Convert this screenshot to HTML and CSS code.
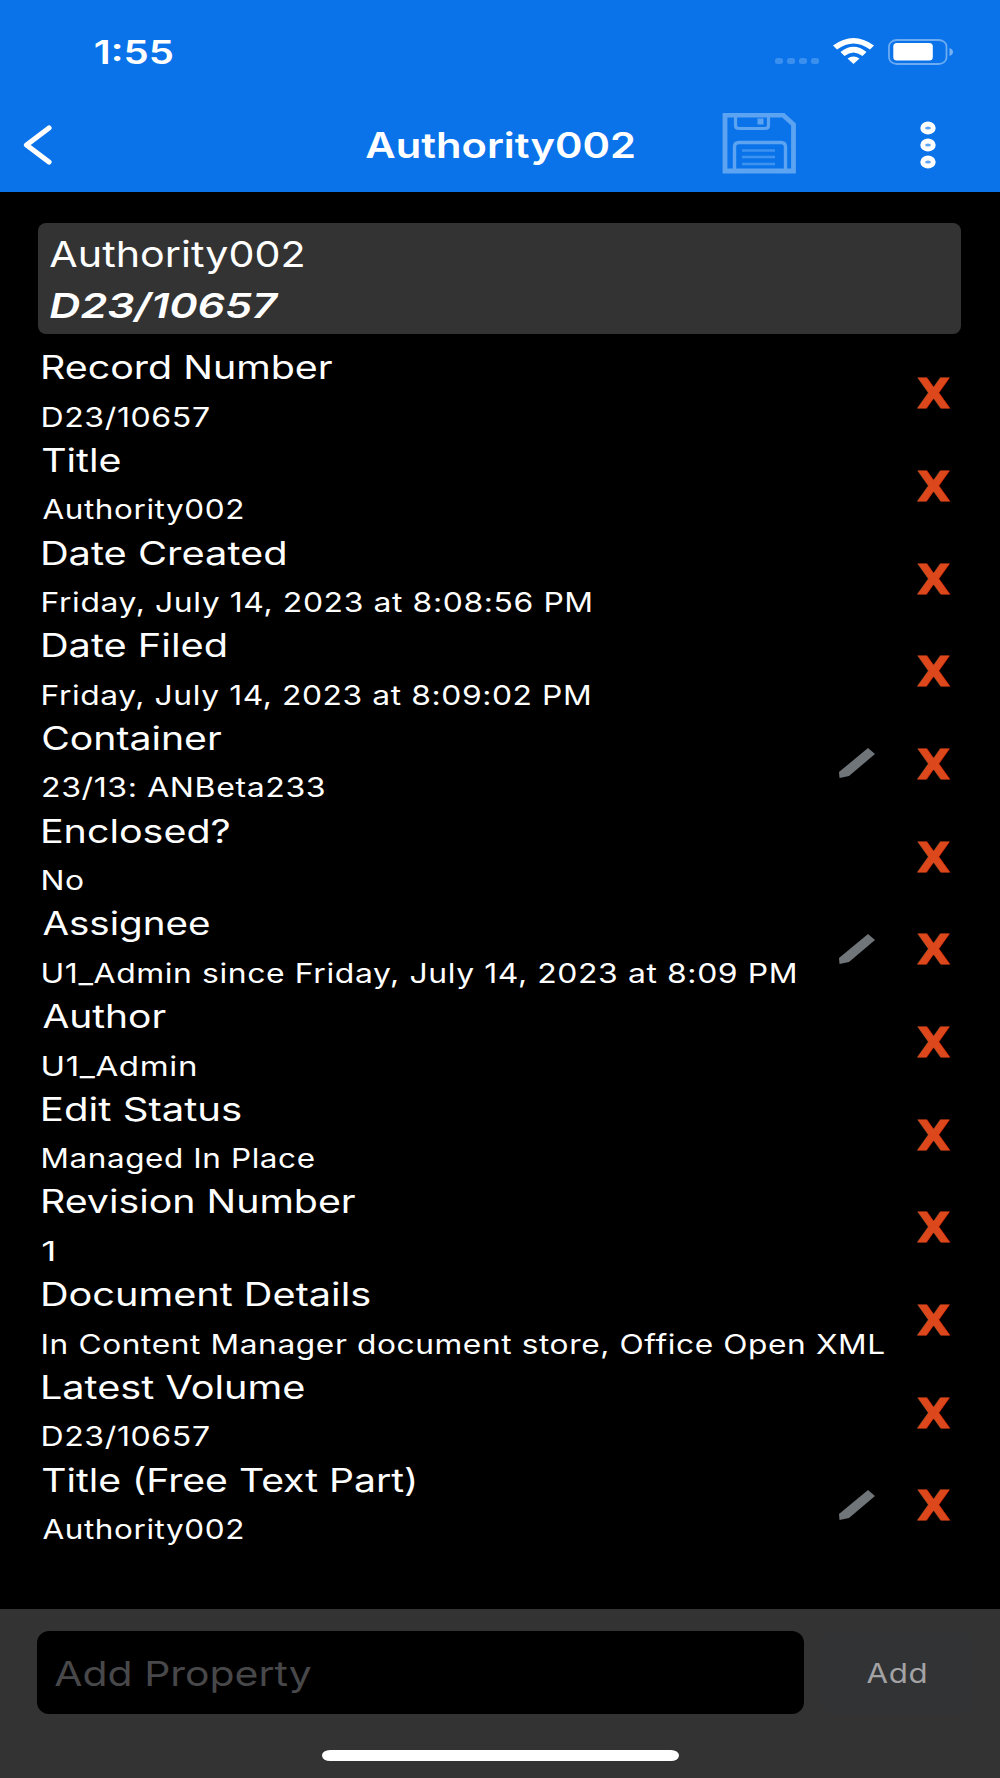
FILE: index.html
```html
<!DOCTYPE html>
<html lang="en">
<head>
<meta charset="utf-8">
<title>Authority002</title>
<link rel="stylesheet" href="styles.css">
</head>
<body>
<header class="top">
  <div class="status">
    <span class="time" data-w="77.5">1:55</span>
    <svg class="status-icons" width="180" height="30" viewBox="0 0 180 30">
      <g fill="#fff" fill-opacity=".2">
        <rect x="0" y="21" width="8" height="6" rx="2.5"/><rect x="12" y="21" width="8" height="6" rx="2.5"/><rect x="24" y="21" width="8" height="6" rx="2.5"/><rect x="36" y="21" width="8" height="6" rx="2.5"/>
      </g>
      <g fill="#fff">
        <path d="M58 8.500Q78.500 -6.500 99 8.500L95 12.500Q78.500 0.500 62 12.500Z"/>
        <path d="M65.500 15Q78.500 4.500 91.500 15L87.500 19Q78.500 12 69.500 19Z"/>
        <path d="M72.500 21.500Q78.500 17.500 84.500 21.500L78.500 27Z"/>
      </g>
      <rect x="114" y="3" width="57.500" height="24" rx="8" ry="6.500" fill="none" stroke="#fff" stroke-opacity=".4" stroke-width="1.800"/>
      <rect x="118.300" y="6" width="39.500" height="17.500" rx="3.500" fill="#fff"/>
      <path d="M174.500 11Q178 12.500 178 15T174.500 19Z" fill="#fff" fill-opacity=".45"/>
    </svg>
  </div>
  <nav class="nav">
    <svg class="back" width="32" height="44" viewBox="0 0 32 44"><path d="M26 5L3.500 22L26 39" fill="none" stroke="#fff" stroke-width="5.200" stroke-linecap="round" stroke-linejoin="round"/></svg>
    <h1 class="title" data-w="268">Authority002</h1>
    <svg class="save" width="74" height="61" viewBox="0 0 74 61" fill="none" stroke="#5ca3f2">
      <path d="M3 2H61L71.500 11.500V58H3Z" stroke-width="4.800"/>
      <path d="M13.500 3V12.500Q13.500 15.500 17 15.500H43Q46.500 15.500 46.500 12.500V3" stroke-width="3.200"/>
      <rect x="35.500" y="5.500" width="6" height="6" fill="#5ca3f2" stroke="none"/>
      <path d="M12.500 57V34Q12.500 29.500 17 29.500H59Q63.500 29.500 63.500 34V57" stroke-width="3.400"/>
      <path d="M20 37.500H53M20 44H53M20 51H53" stroke-width="2.600" stroke="#3e93f0"/>
    </svg>
    <svg class="more" width="16" height="48" viewBox="0 0 16 48" fill="#5ca3f2" stroke="#fff" stroke-width="4.800">
      <ellipse cx="8" cy="7" rx="5.300" ry="4"/><ellipse cx="8" cy="24" rx="5.300" ry="4"/><ellipse cx="8" cy="41" rx="5.300" ry="4"/>
    </svg>
  </nav>
</header>
<main class="content">
  <section class="card">
    <div class="card-name" data-w="253">Authority002</div>
    <div class="card-number" data-w="229">D23/10657</div>
  </section>
  <ul class="properties">
    <li class="row"><div class="text"><div class="label" data-w="289">Record Number</div><div class="value" data-w="166">D23/10657</div></div><span class="remove">X</span></li>
    <li class="row"><div class="text"><div class="label" data-w="77">Title</div><div class="value" data-w="199.500">Authority002</div></div><span class="remove">X</span></li>
    <li class="row"><div class="text"><div class="label" data-w="242">Date Created</div><div class="value" data-w="548">Friday, July 14, 2023 at 8:08:56 PM</div></div><span class="remove">X</span></li>
    <li class="row"><div class="text"><div class="label" data-w="182.500">Date Filed</div><div class="value" data-w="546.500">Friday, July 14, 2023 at 8:09:02 PM</div></div><span class="remove">X</span></li>
    <li class="row"><div class="text"><div class="label" data-w="178">Container</div><div class="value" data-w="281">23/13: ANBeta233</div></div><svg class="edit" width="38" height="32" viewBox="0 0 38 32"><path d="M30 1L37 7L11 29L1.500 31L1 25Z" fill="#6f7579"/></svg><span class="remove">X</span></li>
    <li class="row"><div class="text"><div class="label" data-w="186">Enclosed?</div><div class="value" data-w="40">No</div></div><span class="remove">X</span></li>
    <li class="row"><div class="text"><div class="label" data-w="166">Assignee</div><div class="value" data-w="752.500">U1_Admin since Friday, July 14, 2023 at 8:09 PM</div></div><svg class="edit" width="38" height="32" viewBox="0 0 38 32"><path d="M30 1L37 7L11 29L1.500 31L1 25Z" fill="#6f7579"/></svg><span class="remove">X</span></li>
    <li class="row"><div class="text"><div class="label" data-w="122.500">Author</div><div class="value" data-w="152">U1_Admin</div></div><span class="remove">X</span></li>
    <li class="row"><div class="text"><div class="label" data-w="197.500">Edit Status</div><div class="value" data-w="271">Managed In Place</div></div><span class="remove">X</span></li>
    <li class="row"><div class="text"><div class="label" data-w="312">Revision Number</div><div class="value" data-w="10.500">1</div></div><span class="remove">X</span></li>
    <li class="row"><div class="text"><div class="label" data-w="326.500">Document Details</div><div class="value" data-w="841.500">In Content Manager document store, Office Open XML</div></div><span class="remove">X</span></li>
    <li class="row"><div class="text"><div class="label" data-w="261">Latest Volume</div><div class="value" data-w="166">D23/10657</div></div><span class="remove">X</span></li>
    <li class="row"><div class="text"><div class="label" data-w="371.500">Title (Free Text Part)</div><div class="value" data-w="199.500">Authority002</div></div><svg class="edit" width="38" height="32" viewBox="0 0 38 32"><path d="M30 1L37 7L11 29L1.500 31L1 25Z" fill="#6f7579"/></svg><span class="remove">X</span></li>
  </ul>
</main>
<footer class="bottom">
  <div class="add-bar">
    <div class="field"><span class="placeholder" data-w="256">Add Property</span></div>
    <div class="add"><span class="add-text" data-w="58.500">Add</span></div>
  </div>
  <div class="home"></div>
</footer>
<script src="fit.js"></script>
</body>
</html>
```
FILE: styles.css
```css
* { box-sizing: border-box; }
body {
  margin: 0;
  width: 1000px;
  height: 1778px;
  display: flex;
  flex-direction: column;
  overflow: hidden;
  background: #000;
  color: #fff;
  font-family: Inter, "Liberation Sans", sans-serif;
}
[data-w] {
  display: block;
  width: 0;
  white-space: nowrap;
  transform-origin: 0 50%;
}
.top { height: 191.5px; background: #0a73ea; flex: none; }
.status { height: 104px; display: flex; justify-content: space-between; padding: 0 45px 0 94.5px; }
.time { font-size: 32.5px; font-weight: 600; line-height: 40px; margin-top: 33px; }
.status-icons { margin-top: 37px; }
.nav { height: 87px; display: flex; padding-left: 22.500px; }
.back { margin-top: 19px; }
.title { margin: 18px 0 0 311px; font-size: 35px; font-weight: 600; line-height: 46px; }
.save { margin: 9px 0 0 356.500px; }
.more { margin: 16.500px 0 0 123.500px; }
.content { flex: 1; padding: 31.500px 39px 0 38px; }
.card { height: 111px; border-radius: 8px; background: #333; padding: 6.500px 0 0 12px; }
.card-name { font-size: 35.500px; line-height: 50px; }
.card-number { font-size: 34.500px; font-weight: 600; font-style: italic; line-height: 52px; }
.properties { list-style: none; margin: 12.300px 0 0; padding: 0 12px 0 5px; }
.row { height: 92.700px; display: flex; align-items: center; }
.text { flex: 1; height: 100%; }
.label { font-size: 32px; line-height: 44px; }
.value { font-size: 26.700px; line-height: 43.300px; padding-top: 5.400px; letter-spacing: .5px; }
.edit { margin: 0 42px 0 0; }
.remove {
  font: 700 40px/40px "DejaVu Sans", sans-serif;
  color: #dc481c;
  width: 31px;
  padding-top: 3px;
  -webkit-text-stroke: .8px #dc481c;
  transform: scaleX(1.08);
}
.bottom { height: 169px; flex: none; background: #333; padding: 22px 27px 0 36.500px; }
.add-bar { display: flex; gap: 16px; height: 82.500px; }
.field { width: 767.500px; border-radius: 12px; background: #000; padding-left: 18.500px; }
.placeholder { font-size: 34.500px; line-height: 85px; color: #48484a; }
.add { flex: 1; border-radius: 12px; background: #323335; padding-left: 46.500px; }
.add-text { font-size: 26.700px; line-height: 84px; color: #a3a3a5; letter-spacing: .5px; }
.home { width: 357px; height: 11px; border-radius: 8px / 5.500px; background: #fff; margin: 36.500px 0 0 285.500px; }
```
FILE: fit.js
```js
// Stretches every labelled line horizontally so its ink spans data-w pixels.
// Measuring at ten times the size keeps the ink bounds precise.
const ctx = document.createElement('canvas').getContext('2d');
document.querySelectorAll('[data-w]').forEach((el) => {
  const style = getComputedStyle(el);
  const size = parseFloat(style.fontSize) * 10;
  ctx.font = `${style.fontStyle} ${style.fontWeight} ${size}px ${style.fontFamily}`;
  ctx.letterSpacing = `${(parseFloat(style.letterSpacing) || 0) * 10}px`;
  const box = ctx.measureText(el.textContent);
  const left = -box.actualBoundingBoxLeft / 10;
  const right = box.actualBoundingBoxRight / 10;
  const scale = Number(el.dataset.w) / (right - left);
  el.style.transform = `scaleX(${scale}) translateX(${-left}px)`;
});
```
